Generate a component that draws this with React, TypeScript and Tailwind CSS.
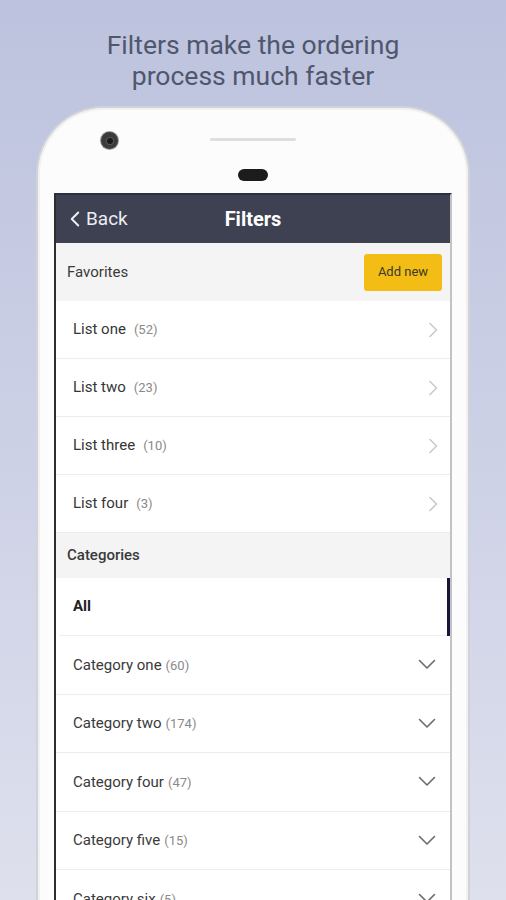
import { ChevronLeft } from 'lucide-react'

const LISTS = [
  { name: 'List one', count: 52 },
  { name: 'List two', count: 23 },
  { name: 'List three', count: 10 },
  { name: 'List four', count: 3 },
]

const CATEGORIES = [
  { name: 'Category one', count: 60 },
  { name: 'Category two', count: 174 },
  { name: 'Category four', count: 47 },
  { name: 'Category five', count: 15 },
  { name: 'Category six', count: 5 },
]

function ChevronRight() {
  return (
    <svg className="h-[16px] w-[10px]" viewBox="0 0 10 16" fill="none" stroke="#c9c9c9" strokeWidth="1.6">
      <path d="M2 1.5 8.5 8 2 14.5" strokeLinecap="round" strokeLinejoin="round" />
    </svg>
  )
}

function ChevronDown() {
  return (
    <svg className="h-[11px] w-[18px]" viewBox="0 0 18 11" fill="none" stroke="#6b6b6b" strokeWidth="1.6">
      <path d="M1.5 1.5 9 9l7.5-7.5" strokeLinecap="round" strokeLinejoin="round" />
    </svg>
  )
}

export default function App() {
  return (
    <div className="h-[900px] w-[506px] overflow-hidden bg-gradient-to-b from-[#bdc2de] via-[#cdd1e6] to-[#dee0ed] font-['Roboto',sans-serif]">
      <h1 className="pt-[29px] text-center text-[26.5px] leading-[31px] font-normal text-[#4f576d]">
        Filters make the ordering
        <br />
        process much faster
      </h1>

      <div className="mx-[36px] mt-[15px] h-[820px] rounded-t-[68px] border-2 border-b-0 border-[#d2d3d7] bg-[#fcfcfc] px-[16px] shadow-[inset_0_0_0_2px_#f1f1f3]">
        {/* hardware */}
        <div className="h-[85px]">
          <div className="grid grid-cols-[1fr_auto_1fr] items-start">
            <div className="pl-[47px] pt-[24px]">
              <div className="flex h-[17px] w-[17px] items-center justify-center rounded-full bg-[#3b3b3d] ring-1 ring-[#9a9a9a]">
                <div className="h-[6px] w-[6px] rounded-full bg-[#1a1a1a] ring-1 ring-[#555]" />
              </div>
            </div>
            <div className="mt-[30px] h-[3px] w-[86px] rounded-full bg-[#dedede]" />
            <div />
          </div>
          <div className="mx-auto mt-[20px] h-[12px] w-[30px] rounded-full bg-[#1c1c1c]" />
        </div>

        {/* screen */}
        <div className="h-[740px] border-l-2 border-r-2 border-t-2 border-l-[#2e2e30] border-r-[#c3c3c6] border-t-[#2e3040] bg-white">
          <div className="grid h-[48px] grid-cols-[1fr_auto_1fr] items-center bg-[#3e4152] text-white">
            <div className="flex items-center pl-[6px] text-[19px] text-[#eceef2]">
              <ChevronLeft className="h-[26px] w-[26px]" strokeWidth={1.8} />
              <span className="-ml-[2px]">Back</span>
            </div>
            <div className="text-[20px] font-bold">Filters</div>
            <div />
          </div>

          <div className="flex h-[58px] items-center justify-between bg-[#f4f4f4] pl-[11px] pr-[8px]">
            <span className="text-[15px] text-[#3a3a3a]">Favorites</span>
            <button className="h-[37px] w-[78px] rounded-[3px] bg-[#f3bd15] text-[13px] text-[#3a3a2a]">Add new</button>
          </div>

          {LISTS.map(l => (
            <div key={l.name} className="flex h-[58px] items-center justify-between border-b border-[#ececec] pl-[17px] pr-[12px]">
              <div className="flex items-baseline">
                <span className="text-[15px] text-[#353535]">{l.name}</span>
                <span className="ml-[8px] text-[13px] text-[#8a8a8a]">({l.count})</span>
              </div>
              <ChevronRight />
            </div>
          ))}

          <div className="flex h-[45px] items-center bg-[#f4f4f4] pl-[11px]">
            <span className="text-[15px] font-medium text-[#3a3a3a]">Categories</span>
          </div>

          <div className="flex h-[58px] items-stretch justify-between">
            <div className="ml-[3px] flex flex-1 items-center border-b border-[#ededed] pl-[14px]">
              <span className="text-[15px] font-bold text-[#222]">All</span>
            </div>
            <div className="w-[3px] bg-[#16163a]" />
          </div>

          {CATEGORIES.map(c => (
            <div key={c.name} className="flex h-[58.5px] items-center justify-between border-b border-[#ececec] pl-[17px] pr-[14px]">
              <div className="flex items-baseline">
                <span className="text-[15px] text-[#3a3a3a]">{c.name}</span>
                <span className="ml-[4px] text-[13px] text-[#8a8a8a]">({c.count})</span>
              </div>
              <ChevronDown />
            </div>
          ))}
        </div>
      </div>
    </div>
  )
}
